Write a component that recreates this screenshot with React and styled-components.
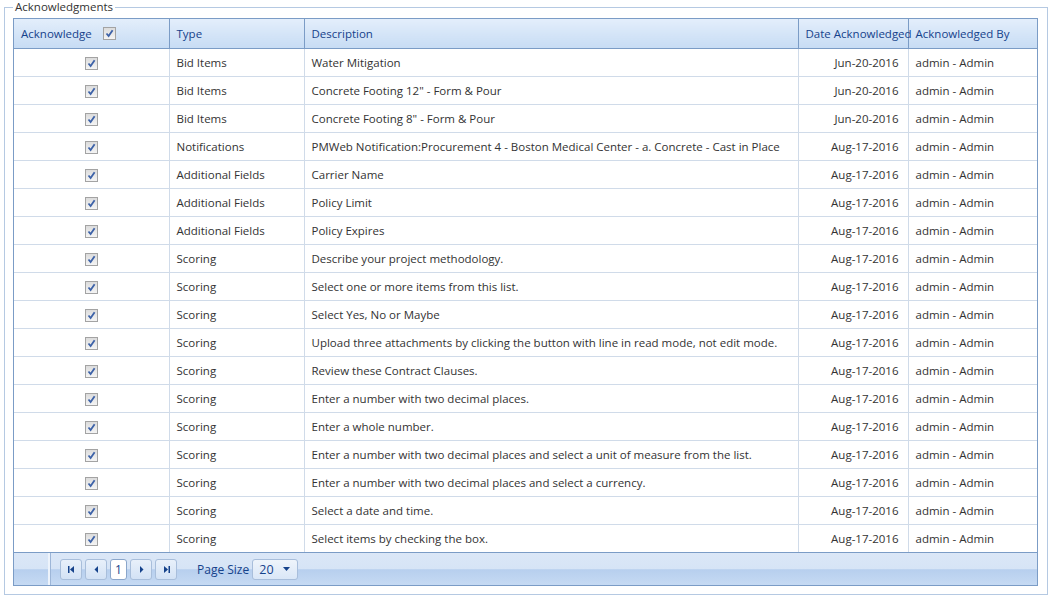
import React from "react";
import styled, { createGlobalStyle } from "styled-components";

const GlobalStyle = createGlobalStyle`
  html, body {
    margin: 0;
    padding: 0;
    background: #fff;
    font-family: "Open Sans", "Liberation Sans", sans-serif;
  }
`;

const Page = styled.div`
  padding: 0 5px 0 4px;
  width: 1053px;
  box-sizing: border-box;
`;

const Fieldset = styled.fieldset`
  margin: 0;
  padding: 4px 9px 8px 8px;
  border: 1px solid #b5c9e2;
  min-width: 0;
`;

const Legend = styled.legend`
  padding: 0 2px;
  margin-left: 0;
  font-size: 11.5px;
  line-height: 14px;
  color: #333;
`;

const Grid = styled.div`
  border: 1px solid #7b9cc6;
`;

const Table = styled.table`
  width: 100%;
  border-collapse: collapse;
  table-layout: fixed;
  font-size: 11.5px;
  color: #333;
`;

const HeadCell = styled.th`
  height: 29px;
  padding: 0 7px;
  text-align: left;
  font-weight: normal;
  color: #15428b;
  background: linear-gradient(#e3eefb, #c7dcf4);
  border-left: 1px solid #7b9cc6;
  border-bottom: 1px solid #7b9cc6;
  white-space: nowrap;
  &:first-child {
    border-left: none;
  }
`;

const Cell = styled.td`
  height: 27px;
  padding: 0 ${(p) => (p.$right ? "9px" : "7px")};
  text-align: ${(p) => (p.$center ? "center" : p.$right ? "right" : "left")};
  border-left: 1px solid #d0dbe9;
  border-bottom: 1px solid #d0dbe9;
  white-space: nowrap;
  overflow: hidden;
  &:first-child {
    border-left: none;
  }
`;

const Row = styled.tr`
  &:last-child td {
    border-bottom: none;
  }
`;

const CheckBox = styled.span`
  display: inline-block;
  vertical-align: middle;
  width: 11px;
  height: 11px;
  border: 1px solid #a3a3a3;
  background: linear-gradient(#dcdcdc, #f4f4f4);
  position: relative;
  margin-left: ${(p) => (p.$gap ? "8px" : "0")};
  margin-top: ${(p) => (p.$gap ? "-2px" : "1px")};
  svg {
    position: absolute;
    left: 1px;
    top: 1px;
  }
`;

const Check = ({ gap }) => (
  <CheckBox $gap={gap}>
    <svg width="9" height="9" viewBox="0 0 9 9">
      <path d="M1.5 4.5 L3.6 7 L7.6 1.2" fill="none" stroke="#3d62a8" strokeWidth="1.8" />
    </svg>
  </CheckBox>
);

const Pager = styled.div`
  display: flex;
  align-items: center;
  height: 32px;
  border-top: 1px solid #7b9cc6;
  background: linear-gradient(#dbe7f7 0%, #d6e4f6 50%, #b7cfee 52%, #c6daf3 100%);
`;

const PagerLead = styled.div`
  width: 34px;
  height: 100%;
  border-right: 2px solid #edf3fb;
  box-shadow: 1px 0 0 #9db6d8;
`;

const PagerButtons = styled.div`
  display: flex;
  gap: 3px;
  margin-left: 10px;
  align-items: center;
`;

const PagerBtn = styled.button`
  width: 22px;
  height: 21px;
  padding: 0;
  border: 1px solid #a8bedb;
  border-radius: 3px;
  background: linear-gradient(#e8f0fa, #d3e2f5);
  display: flex;
  align-items: center;
  justify-content: center;
`;

const PageNum = styled.span`
  width: 15px;
  height: 19px;
  border: 1px solid #8aa6cb;
  border-radius: 3px;
  background: #fff;
  color: #15428b;
  font-size: 12px;
  display: flex;
  align-items: center;
  justify-content: center;
`;

const SizeLabel = styled.span`
  margin-left: 20px;
  font-size: 12px;
  color: #15428b;
`;

const SizeSelect = styled.div`
  margin-left: 3px;
  width: 46px;
  height: 21px;
  box-sizing: border-box;
  border: 1px solid #a8bedb;
  border-radius: 3px;
  background: linear-gradient(#eef4fb, #dae7f7);
  display: flex;
  align-items: center;
  justify-content: space-between;
  padding: 0 7px 0 6px;
  font-size: 12.5px;
  color: #15428b;
`;

const Arrow = ({ kind }) => {
  const paths = {
    first: (
      <>
        <rect x="1" y="1" width="1.5" height="7" fill="#15428b" />
        <path d="M7 1 L3 4.5 L7 8 Z" fill="#15428b" />
      </>
    ),
    prev: <path d="M6 1 L2.5 4.5 L6 8 Z" fill="#15428b" />,
    next: <path d="M3 1 L6.5 4.5 L3 8 Z" fill="#15428b" />,
    last: (
      <>
        <path d="M2 1 L6 4.5 L2 8 Z" fill="#15428b" />
        <rect x="6.5" y="1" width="1.5" height="7" fill="#15428b" />
      </>
    ),
  };
  return (
    <svg width="9" height="9" viewBox="0 0 9 9">
      {paths[kind]}
    </svg>
  );
};

const rows = [
  ["Bid Items", "Water Mitigation", "Jun-20-2016"],
  ["Bid Items", 'Concrete Footing 12" - Form & Pour', "Jun-20-2016"],
  ["Bid Items", 'Concrete Footing 8" - Form & Pour', "Jun-20-2016"],
  ["Notifications", "PMWeb Notification:Procurement 4 - Boston Medical Center - a. Concrete - Cast in Place", "Aug-17-2016"],
  ["Additional Fields", "Carrier Name", "Aug-17-2016"],
  ["Additional Fields", "Policy Limit", "Aug-17-2016"],
  ["Additional Fields", "Policy Expires", "Aug-17-2016"],
  ["Scoring", "Describe your project methodology.", "Aug-17-2016"],
  ["Scoring", "Select one or more items from this list.", "Aug-17-2016"],
  ["Scoring", "Select Yes, No or Maybe", "Aug-17-2016"],
  ["Scoring", "Upload three attachments by clicking the button with line in read mode, not edit mode.", "Aug-17-2016"],
  ["Scoring", "Review these Contract Clauses.", "Aug-17-2016"],
  ["Scoring", "Enter a number with two decimal places.", "Aug-17-2016"],
  ["Scoring", "Enter a whole number.", "Aug-17-2016"],
  ["Scoring", "Enter a number with two decimal places and select a unit of measure from the list.", "Aug-17-2016"],
  ["Scoring", "Enter a number with two decimal places and select a currency.", "Aug-17-2016"],
  ["Scoring", "Select a date and time.", "Aug-17-2016"],
  ["Scoring", "Select items by checking the box.", "Aug-17-2016"],
];

export default function App() {
  return (
    <Page>
      <GlobalStyle />
      <Fieldset>
        <Legend>Acknowledgments</Legend>
        <Grid>
          <Table>
            <colgroup>
              <col style={{ width: 155 }} />
              <col style={{ width: 135 }} />
              <col style={{ width: 494 }} />
              <col style={{ width: 110 }} />
              <col />
            </colgroup>
            <thead>
              <tr>
                <HeadCell>
                  Acknowledge <Check gap />
                </HeadCell>
                <HeadCell>Type</HeadCell>
                <HeadCell>Description</HeadCell>
                <HeadCell>Date Acknowledged</HeadCell>
                <HeadCell>Acknowledged By</HeadCell>
              </tr>
            </thead>
            <tbody>
              {rows.map(([type, desc, date], i) => (
                <Row key={i}>
                  <Cell $center>
                    <Check />
                  </Cell>
                  <Cell>{type}</Cell>
                  <Cell>{desc}</Cell>
                  <Cell $right>{date}</Cell>
                  <Cell>admin - Admin</Cell>
                </Row>
              ))}
            </tbody>
          </Table>
          <Pager>
            <PagerLead />
            <PagerButtons>
              <PagerBtn><Arrow kind="first" /></PagerBtn>
              <PagerBtn><Arrow kind="prev" /></PagerBtn>
              <PageNum>1</PageNum>
              <PagerBtn><Arrow kind="next" /></PagerBtn>
              <PagerBtn><Arrow kind="last" /></PagerBtn>
            </PagerButtons>
            <SizeLabel>Page Size</SizeLabel>
            <SizeSelect>
              20
              <svg width="7" height="4" viewBox="0 0 7 4">
                <path d="M0 0 L7 0 L3.5 4 Z" fill="#15428b" />
              </svg>
            </SizeSelect>
          </Pager>
        </Grid>
      </Fieldset>
    </Page>
  );
}
